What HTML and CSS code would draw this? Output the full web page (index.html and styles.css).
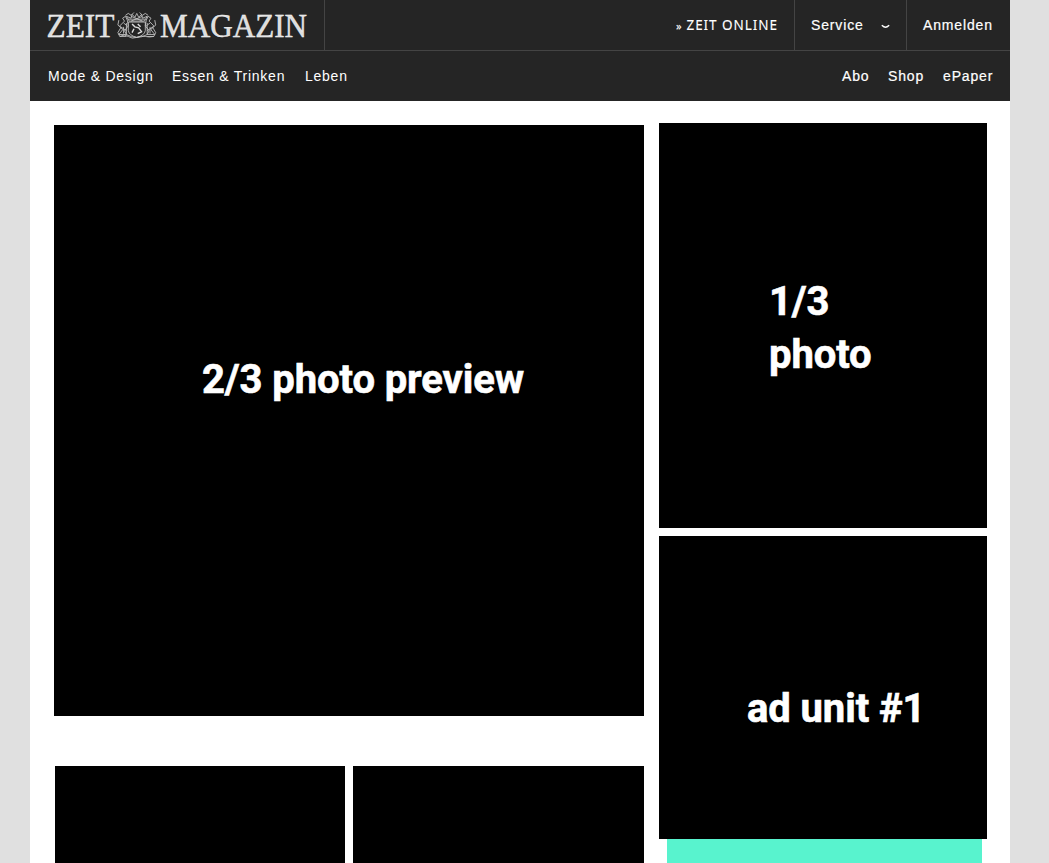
FILE: index.html
```html
<!DOCTYPE html>
<html lang="de">
<head>
<meta charset="utf-8">
<title>ZEITmagazin</title>
<link rel="stylesheet" href="styles.css">
</head>
<body>
<div class="page">
  <header class="header">
    <div class="top">
      <a class="brand">
        <svg class="logo" width="278" height="49" viewBox="0 0 278 49">
          <g class="logo-text">
            <text x="0.5" y="36" textLength="68" lengthAdjust="spacingAndGlyphs">ZEIT</text>
            <text x="114" y="36" textLength="147" lengthAdjust="spacingAndGlyphs">MAGAZIN</text>
          </g>
          <g class="crest" transform="translate(4.8 10.5) scale(.945 .96)">
            <path class="shield" d="M82 11h18v9q-1 5-9 7q-8-2-9-7z"/>
            <path class="bear" d="M86 13l3 3 4 1 3 4-4 2M88 18l-2 4M92 13l3 3"/>
            <path d="M83 10l-3-5 5 2 1-4 3 3 2-4 2 4 3-3 1 4 5-2-3 5zM82 8h18M85 5l12 5M97 5l-12 5M79 4l3-2 3 2 3-3M103 4l-3-2-3 2-3-3"/>
            <path d="M79 5l-3 2 2 3-5 5 3 4-4 5h8l-2-4 4-5-1-6zM77 12l4 3M74 16l6 4M72 9l-1 5 3 3-3 5 2 4h7M77 16v7M80 12v12"/>
            <path d="M103 5l3 2-2 3 5 5-3 4 4 5h-8l2-4-4-5 1-6zM105 12l-4 3M108 16l-6 4M110 9l1 5-3 3 3 5-2 4h-7M105 16v7M102 12v12"/>
            <path d="M73 26q5-3 9 0t9 1 9-1 9 0M80 24q11 6 22 0"/>
          </g>
        </svg>
      </a>
      <a class="online"><small>»</small> ZEIT ONLINE</a>
      <a class="service">Service
        <svg class="chevron" width="9" height="5" viewBox="0 0 9 5"><path d="M.8 1.2Q3 3.2 4.5 3.2T8.2 1.2"/></svg>
      </a>
      <a class="login">Anmelden</a>
    </div>
    <nav class="nav">
      <a class="mode">Mode &amp; Design</a>
      <a class="essen">Essen &amp; Trinken</a>
      <a class="leben">Leben</a>
      <a class="abo">Abo</a>
      <a class="shop">Shop</a>
      <a class="epaper">ePaper</a>
    </nav>
  </header>
  <main class="content">
    <div class="main-col">
      <section class="box lead">2/3 photo preview</section>
      <div class="pair">
        <section class="box"></section>
        <section class="box"></section>
      </div>
    </div>
    <aside class="side-col">
      <section class="box photo">1/3<br>photo</section>
      <section class="box ad">ad unit #1</section>
      <div class="teal"></div>
    </aside>
  </main>
</div>
</body>
</html>
```
FILE: styles.css
```css
* { box-sizing: border-box; }
body { margin: 0; background: #e0e0e0; height: 863px; overflow: hidden; }
.page { width: 980px; height: 863px; margin-left: 30px; background: #fff; overflow: hidden; }
.header { height: 101px; background: #252525; color: #fff; font: 14px/50px "Liberation Sans", Arial, sans-serif; letter-spacing: .85px; white-space: nowrap; -webkit-text-stroke: .2px; }
.top { display: flex; height: 51px; border-bottom: 1px solid #444; }
.brand { width: 295px; padding: 1px 0 0 16px; border-right: 1px solid #444; line-height: 0; }
.logo { display: block; overflow: visible; }
.logo-text { font: 33.5px/1 "Liberation Serif", "Times New Roman", serif; letter-spacing: 0; fill: #ddd; stroke: #fff; stroke-width: .4; }
.crest { fill: none; stroke: #c4c4c4; stroke-width: .9; }
.crest .bear { stroke: #ddd; stroke-width: 1.5; }
.online { margin-left: auto; width: 118px; font-family: "Noto Sans", sans-serif; font-size: 13.5px; letter-spacing: .95px; -webkit-text-stroke: .1px; }
.online small { font-size: 11px; letter-spacing: .4px; }
.service { display: flex; align-items: center; justify-content: space-between; width: 113px; padding: 0 16px; border: solid #444; border-width: 0 1px; }
.chevron { fill: none; stroke: #fff; stroke-width: 1.4; margin-top: 2px; }
.login { width: 103px; padding-left: 16px; }
.nav { display: flex; padding-left: 18px; }
.mode, .essen, .leben { letter-spacing: .75px; -webkit-text-stroke: 0; }
.mode { width: 124px; }
.essen { width: 133px; }
.abo { margin-left: auto; width: 46px; }
.shop { width: 55px; }
.epaper { width: 67px; }
.content { display: flex; gap: 15px; padding: 22px 0 0 24px; }
.main-col { width: 590px; padding-top: 2px; }
.side-col { width: 328px; }
.box { background: #000; color: #fff; font: bold 40px/53px Roboto, sans-serif; letter-spacing: -.1px; -webkit-text-stroke: .6px #fff; }
.lead { height: 591px; padding: 228px 0 0 148px; }
.pair { display: grid; grid-template-columns: 290px 291px; gap: 8px; margin: 50px 0 0 1px; }
.pair .box { height: 97px; }
.photo { height: 405px; padding: 152px 0 0 110px; }
.ad { height: 303px; margin-top: 8px; padding: 146px 0 0 88px; }
.teal { width: 315px; height: 24px; margin-left: 8px; background: #58f3ce; }
```
